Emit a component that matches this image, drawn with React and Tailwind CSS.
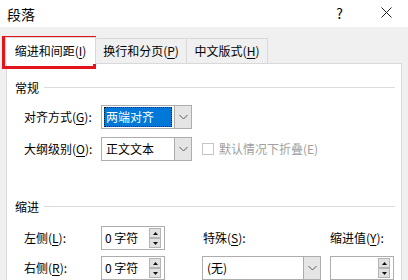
import React from "react";

const U = ({ children }) => <span className="underline underline-offset-[2px] decoration-[1px]">{children}</span>;

function Chevron() {
  return (
    <svg width="9" height="6" viewBox="0 0 9 6" className="block">
      <path d="M0.5 1 L4.5 5 L8.5 1" fill="none" stroke="#5a5a5a" strokeWidth="1" />
    </svg>
  );
}

function Dropdown({ w, children, selected }) {
  return (
    <div className={`${w} h-[24px] border border-[#adadad] bg-white flex items-stretch`}>
      <div className="flex-1 flex items-center px-[2px] min-w-0">
        {selected ? (
          <div className="h-[20px] w-full bg-[#0078d7] text-white flex items-center pl-[2px] outline outline-1 outline-dotted outline-[#1a1a1a] -outline-offset-1">
            {children}
          </div>
        ) : (
          <div className="pl-[2px]">{children}</div>
        )}
      </div>
      <div className="w-[17px] bg-[#e5e5e5] border-l border-[#adadad] flex items-center justify-center">
        <Chevron />
      </div>
    </div>
  );
}

function SpinBtn({ up }) {
  return (
    <div className="w-[12px] h-[10px] bg-[#e1e1e1] border border-[#b4b4b4] flex items-center justify-center">
      <svg width="5" height="3" viewBox="0 0 5 3" className="block">
        {up ? <path d="M0 3 L2.5 0 L5 3 Z" fill="#111" /> : <path d="M0 0 L2.5 3 L5 0 Z" fill="#111" />}
      </svg>
    </div>
  );
}

function Spin({ w, text }) {
  return (
    <div className={`${w} h-[24px] border border-[#adadad] bg-white flex items-center pl-[3px] pr-[3px]`}>
      <div className="flex-1">{text}</div>
      <div className="flex flex-col gap-0">
        <SpinBtn up />
        <SpinBtn />
      </div>
    </div>
  );
}

function Section({ title }) {
  return (
    <div className="h-[16px] flex items-center pl-[8px] pr-[6px]">
      <span className="leading-[16px]">{title}</span>
      <div className="flex-1 h-px bg-[#dcdcdc] ml-[5px] -mt-[2px]" />
    </div>
  );
}

export default function App() {
  return (
    <div
      className="relative w-[408px] h-[280px] overflow-hidden bg-[#f0f0f0] text-[12px] text-[#000] leading-[16px]"
      style={{ fontFamily: '"Noto Sans CJK SC", "Noto Sans", sans-serif' }}
    >
      {/* title bar */}
      <div className="h-[27px] bg-white flex items-center pl-[7px]">
        <span className="text-[14px] leading-[18px]">段落</span>
        <div className="flex-1" />
        <span className="text-[14px] leading-[18px] mr-[38px] -mt-[2px]">?</span>
        <svg width="11" height="11" viewBox="0 0 11 11" className="mr-[16px] -mt-[2px]">
          <path d="M0.5 0.5 L10.5 10.5 M10.5 0.5 L0.5 10.5" stroke="#222" strokeWidth="1" />
        </svg>
      </div>

      {/* tabs */}
      <div className="h-[36px] flex items-end pl-[5px] pt-[9px]">
        <div className="relative z-10 w-[91px] h-[27px] -mb-px bg-white border border-b-0 border-[#d9d9d9] flex items-center justify-center">
          缩进和间距(<U>I</U>)
        </div>
        <div className="w-[91px] h-[25px] border border-l-0 border-b-0 border-[#d9d9d9] flex items-center justify-center">
          换行和分页(<U>P</U>)
        </div>
        <div className="w-[81px] h-[25px] border border-l-0 border-b-0 border-[#d9d9d9] flex items-center justify-center">
          中文版式(<U>H</U>)
        </div>
      </div>

      {/* panel */}
      <div className="mx-[6px] h-[230px] bg-white border border-[#d9d9d9] pt-[16px]">
        <Section title="常规" />
        <div className="pl-[17px] mt-[9px] flex flex-col gap-[8px]">
          <div className="flex items-center h-[24px]">
            <div className="w-[77px]">对齐方式(<U>G</U>):</div>
            <Dropdown w="w-[91px]" selected>两端对齐</Dropdown>
          </div>
          <div className="flex items-center h-[24px]">
            <div className="w-[77px]">大纲级别(<U>O</U>):</div>
            <Dropdown w="w-[91px]">正文文本</Dropdown>
            <div className="ml-[10px] w-[12px] h-[12px] border border-[#c4c4c4] bg-white" />
            <span className="ml-[5px] text-[#a0a0a0]">默认情况下折叠(E)</span>
          </div>
        </div>

        <div className="mt-[38px]">
          <Section title="缩进" />
        </div>

        <div className="pl-[17px] mt-[11px] grid grid-cols-[77px_101px_128px_64px] grid-rows-[24px_24px] gap-y-[6px] items-center">
          <div>左侧(<U>L</U>):</div>
          <Spin w="w-[64px]" text="0 字符" />
          <div className="pl-[1px]">特殊(<U>S</U>):</div>
          <div>缩进值(<U>Y</U>):</div>

          <div>右侧(<U>R</U>):</div>
          <Spin w="w-[64px]" text="0 字符" />
          <Dropdown w="w-[119px]">(无)</Dropdown>
          <Spin w="w-[64px]" text="" />
        </div>
      </div>

      {/* red annotation box */}
      <div className="absolute left-[2px] top-[36px] w-[94px] h-[33px] border-[3px] border-[#e3141b]" />
    </div>
  );
}
